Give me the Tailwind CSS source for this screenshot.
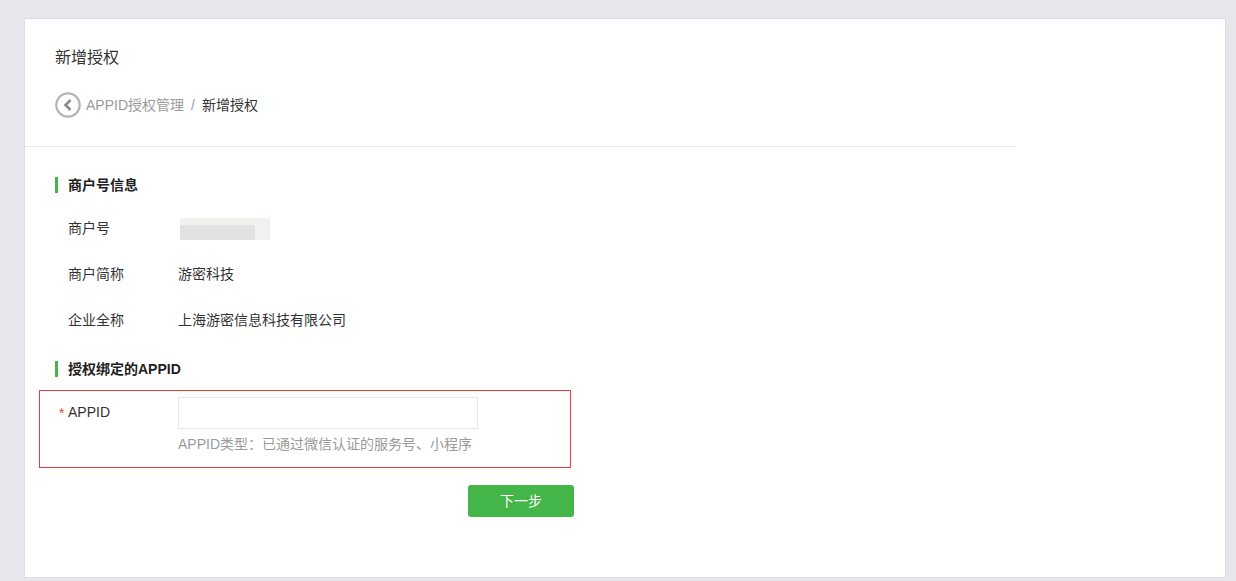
<!DOCTYPE html>
<html lang="zh-CN">
<head>
    <meta charset="UTF-8">
    <title>新增授权</title>
    <script src="https://cdn.jsdelivr.net/npm/@tailwindcss/browser@4"></script>
</head>
<body class="h-[581px] overflow-hidden bg-[#e6e7ec] font-['Liberation_Sans','Noto_Sans_CJK_SC',sans-serif] text-[14px] text-[#333333]">
    <div class="ml-[24px] mt-[18px] h-[560px] w-[1202px] border border-[#dcdde0] bg-white">
        <div class="w-[991px]">
            <div class="h-[128px] border-b border-[#e7e7eb] pl-[30px] pt-[27px]">
                <h2 class="text-[16px] leading-[24px] font-normal">新增授权</h2>
                <div class="mt-[22px] flex h-[26px] items-center">
                    <svg class="mr-[5px]" width="26" height="26" viewBox="0 0 26 26" fill="none">
                        <circle cx="13" cy="13" r="11.7" stroke="#b2b5b5" stroke-width="2.2"/>
                        <path d="M15.5 8 L10.5 13 L15.5 18" stroke="#8f8a92" stroke-width="2.6"/>
                    </svg>
                    <span class="text-[#9a9a9a]">APPID授权管理</span>
                    <span class="mx-[7px] text-[#9a9a9a]">/</span>
                    <span>新增授权</span>
                </div>
            </div>

            <div class="pl-[30px] pt-[30px]">
                <h3 class="h-[16px] border-l-[3px] border-[#44b549] pl-[10px] text-[14px] leading-[16px] font-bold text-[#222222]">商户号信息</h3>

                <div class="mt-[23px] flex h-[24px] items-center pl-[13px]">
                    <span class="w-[112px]">商户号</span>
                    <div class="h-[22px] w-[90px] self-end bg-[#f0f2f0] pt-[7px]">
                        <div class="h-[15px] w-[75px] bg-[#e1e2e1]"></div>
                    </div>
                </div>
                <div class="mt-[22px] flex h-[24px] items-center pl-[13px]">
                    <span class="w-[110px]">商户简称</span>
                    <span>游密科技</span>
                </div>
                <div class="mt-[22px] flex h-[24px] items-center pl-[13px]">
                    <span class="w-[110px]">企业全称</span>
                    <span>上海游密信息科技有限公司</span>
                </div>

                <h3 class="mt-[29px] h-[16px] border-l-[3px] border-[#44b549] pl-[10px] text-[14px] leading-[16px] font-bold text-[#222222]">授权绑定的APPID</h3>

                <div class="mt-[13px] -ml-[16px] h-[78px] w-[532px] border border-[#f23b3b] pl-[28px] pt-[6px]">
                    <div class="flex">
                        <span class="relative w-[110px] leading-[30px]">
                            <span class="absolute -left-[9px] top-[1px] text-[#e64340]">*</span>APPID
                        </span>
                        <div>
                            <input type="text" class="block h-[32px] w-[300px] border border-[#e7e7eb] bg-white outline-none">
                            <p class="mt-[4px] leading-[22px] text-[#9a9a9a]">APPID类型：已通过微信认证的服务号、小程序</p>
                        </div>
                    </div>
                </div>

                <button class="mt-[17px] ml-[413px] block h-[32px] w-[106px] rounded-[3px] bg-[#44b549] text-[14px] text-white">下一步</button>
            </div>
        </div>
    </div>
</body>
</html>
